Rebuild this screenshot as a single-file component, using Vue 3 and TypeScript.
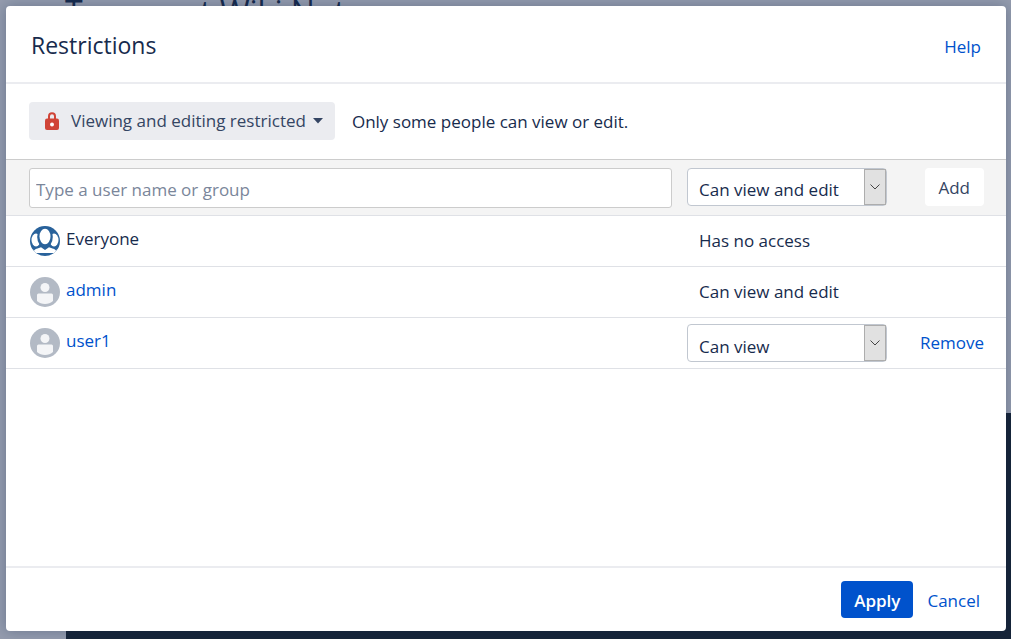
<script setup lang="ts">
import { ref } from 'vue'

interface Person {
  name: string
  permission: string
  kind: 'group' | 'user'
  editable: boolean
}

const people = ref<Person[]>([
  { name: 'Everyone', permission: 'Has no access', kind: 'group', editable: false },
  { name: 'admin', permission: 'Can view and edit', kind: 'user', editable: false },
  { name: 'user1', permission: 'Can view', kind: 'user', editable: true },
])

const query = ref('')
const newPermission = ref('Can view and edit')
const options = ['Can view and edit', 'Can view']

function add(): void {
  const name = query.value.trim()
  if (!name) return
  people.value.push({ name, permission: newPermission.value, kind: 'user', editable: true })
  query.value = ''
}

function remove(person: Person): void {
  people.value = people.value.filter((p) => p !== person)
}
</script>

<template>
  <div class="page">
    <div class="backdrop" aria-hidden="true">
      <div class="page-title">Transport Wiki Note</div>
      <div class="page-code"></div>
    </div>

    <section class="dialog" role="dialog" aria-labelledby="dialog-title">
      <header class="header">
        <h2 id="dialog-title">Restrictions</h2>
        <a href="#help">Help</a>
      </header>

      <div class="mode">
        <button type="button" class="mode-button" aria-haspopup="true">
          <svg class="lock" width="14" height="18" viewBox="0 0 14 18" aria-hidden="true">
            <path d="M4 8V4.200a3 3 0 0 1 6 0V8" fill="none" stroke="#d04437" stroke-width="2" />
            <rect x="0" y="6.500" width="14" height="11.500" rx="2" fill="#d04437" />
            <circle cx="7" cy="12.500" r="2" fill="#fff" />
          </svg>
          <span>Viewing and editing restricted</span>
          <svg class="caret" width="10" height="6" viewBox="0 0 10 6" aria-hidden="true">
            <path d="M0 0h10L5 5.500z" fill="#344563" />
          </svg>
        </button>
        <span class="mode-text">Only some people can view or edit.</span>
      </div>

      <div class="body">
        <table class="people">
          <colgroup>
            <col />
            <col class="col-permission" />
            <col class="col-action" />
          </colgroup>
          <tbody>
            <tr class="add-row">
              <td>
                <input
                  v-model="query"
                  type="text"
                  class="search"
                  aria-label="User name or group"
                  placeholder="Type a user name or group"
                />
              </td>
              <td>
                <div class="select">
                  <select v-model="newPermission" aria-label="Permission to add">
                    <option v-for="o in options" :key="o">{{ o }}</option>
                  </select>
                  <span class="arrow">
                    <svg width="10" height="6" viewBox="0 0 10 6" aria-hidden="true">
                      <path d="M.5.500 5 5 9.500.500" fill="none" stroke="#444" />
                    </svg>
                  </span>
                </div>
              </td>
              <td class="action">
                <button type="button" class="add" @click="add">Add</button>
              </td>
            </tr>
            <tr v-for="p in people" :key="p.name">
              <td>
                <div class="person">
                  <svg v-if="p.kind === 'group'" width="30" height="30" viewBox="0 0 30 30" aria-hidden="true">
                    <defs>
                      <clipPath id="group-disc"><circle cx="15" cy="15" r="15" /></clipPath>
                    </defs>
                    <g clip-path="url(#group-disc)">
                      <rect width="30" height="30" fill="#29629b" />
                      <ellipse cx="6" cy="14" rx="4.500" ry="6.500" fill="#fff" />
                      <ellipse cx="24" cy="14" rx="4.500" ry="6.500" fill="#fff" />
                      <path d="M0 23.500l3-.5 .5 2L3 27H0zM30 23.500l-3-.5-.5 2L27 27h3z" fill="#fff" />
                      <ellipse cx="15" cy="11" rx="7.800" ry="10.500" fill="#29629b" />
                      <path d="M3 27c.5-2.500 2-4 4.500-4.500L11 21.300l4 2.700 4-2.700 3.500 1.200c2.500.5 4 2 4.500 4.500z" fill="#fff" />
                      <ellipse cx="15" cy="10.500" rx="5.500" ry="7.800" fill="#fff" />
                    </g>
                  </svg>
                  <svg v-else width="30" height="30" viewBox="0 0 30 30" aria-hidden="true">
                    <circle cx="15" cy="15" r="15" fill="#b3bac5" />
                    <circle cx="15" cy="10.500" r="4.500" fill="#f4f5f7" />
                    <path d="M7 18a1.500 1.500 0 0 1 1.500-1.500h13A1.500 1.500 0 0 1 23 18v6c-2 2-5 3-8 3s-6-1-8-3z" fill="#f4f5f7" />
                  </svg>
                  <span v-if="p.kind === 'group'">{{ p.name }}</span>
                  <a v-else :href="'#' + p.name">{{ p.name }}</a>
                </div>
              </td>
              <td>
                <div v-if="p.editable" class="select">
                  <select v-model="p.permission" :aria-label="'Permission for ' + p.name">
                    <option v-for="o in options" :key="o">{{ o }}</option>
                  </select>
                  <span class="arrow">
                    <svg width="10" height="6" viewBox="0 0 10 6" aria-hidden="true">
                      <path d="M.5.500 5 5 9.500.500" fill="none" stroke="#444" />
                    </svg>
                  </span>
                </div>
                <span v-else class="permission">{{ p.permission }}</span>
              </td>
              <td class="action">
                <a v-if="p.editable" href="#remove" @click.prevent="remove(p)">Remove</a>
              </td>
            </tr>
          </tbody>
        </table>
      </div>

      <footer class="footer">
        <button type="button" class="apply">Apply</button>
        <a href="#cancel">Cancel</a>
      </footer>
    </section>
  </div>
</template>

<style>
body {
  margin: 0;
}
</style>

<style scoped>
.page {
  position: relative;
  display: flex;
  box-sizing: border-box;
  min-height: 100vh;
  padding: 6px 5px 8px 6px;
  overflow: hidden;
  color: #172b4d;
  font: 17px/24px 'Open Sans', 'Noto Sans', sans-serif;
}

.backdrop {
  position: absolute;
  inset: 0;
  overflow: hidden;
  background: #949cae;
}

.page-title {
  position: absolute;
  top: -6px;
  left: 65px;
  color: #172b4d;
  font-size: 32px;
  line-height: 36px;
}

.page-code {
  position: absolute;
  top: 413px;
  right: 0;
  bottom: 0;
  left: 66px;
  background: #172539;
}

.dialog {
  position: relative;
  display: flex;
  flex: 1;
  flex-direction: column;
  border-radius: 4px;
  background: #fff;
  box-shadow: 0 0 14px rgba(9, 30, 66, 0.3);
}

a {
  color: #0052cc;
  text-decoration: none;
}

button,
input,
select {
  box-sizing: border-box;
  margin: 0;
  border: 0;
  color: inherit;
  font: inherit;
}

.header {
  display: flex;
  align-items: center;
  justify-content: space-between;
  padding: 23px 25px 21px;
  border-bottom: 2px solid #ebecf0;
}

h2 {
  margin: 0;
  font-size: 23px;
  font-weight: 400;
  line-height: 32px;
}

.header a {
  padding-top: 4px;
}

.mode {
  display: flex;
  align-items: center;
  gap: 17px;
  padding: 18px 23px 19px;
  border-bottom: 1px solid #ccc;
}

.mode-button {
  display: flex;
  align-items: center;
  height: 38px;
  padding: 0 12px 0 16px;
  border-radius: 4px;
  background: #ebecf0;
  color: #344563;
}

.mode-text {
  padding-top: 2px;
}

.lock {
  margin-right: 12px;
}

.caret {
  margin-left: 7px;
}

.body {
  flex: 1;
}

.people {
  width: 100%;
  border-collapse: separate;
  border-spacing: 0;
  table-layout: fixed;
}

.col-permission {
  width: 215px;
}

.col-action {
  width: 104px;
}

td {
  height: 50px;
  padding: 0;
  border-bottom: 1px solid #dfe1e6;
}

td:first-child {
  padding: 0 15px 0 23px;
}

.add-row td {
  height: 55px;
  background: #f4f4f4;
}

.search {
  display: block;
  width: 100%;
  height: 40px;
  padding: 3px 6px 0;
  border: 1px solid #ccc;
  border-radius: 3px;
  background: #fff;
}

.search::placeholder {
  color: #7a869a;
  opacity: 1;
}

.select {
  display: grid;
  width: 200px;
  height: 38px;
  box-sizing: border-box;
  border: 1px solid #c1c7d0;
  border-radius: 4px;
  background: #fff;
}

.select select {
  grid-area: 1 / 1;
  width: 100%;
  padding: 7px 24px 0 11px;
  border-radius: 4px;
  background: transparent;
  appearance: none;
}

.select .arrow {
  display: grid;
  grid-area: 1 / 1;
  justify-self: end;
  place-items: center;
  width: 22px;
  box-sizing: border-box;
  border: 1px solid #adadad;
  background: #e1e1e1;
  pointer-events: none;
}

.person {
  display: flex;
  align-items: center;
  gap: 6px;
  padding-left: 1px;
}

.person span,
.person a {
  padding-bottom: 4px;
}

.permission {
  padding-left: 12px;
}

.action {
  padding-right: 22px;
  text-align: right;
}

.add-row td:not(:first-child) {
  padding-bottom: 2px;
  height: 53px;
}

.add {
  height: 38px;
  padding: 2px 14px 0 13px;
  border-radius: 4px;
  background: #fff;
  color: #344563;
}

.footer {
  display: flex;
  align-items: center;
  justify-content: flex-end;
  gap: 14px;
  padding: 13px 26px;
  border-top: 2px solid #ebecf0;
}

.footer a {
  padding-top: 2px;
}

.apply {
  height: 37px;
  padding: 2px 13px 0;
  border-radius: 4px;
  background: #0052cc;
  color: #fff;
  font-weight: 600;
}
</style>
